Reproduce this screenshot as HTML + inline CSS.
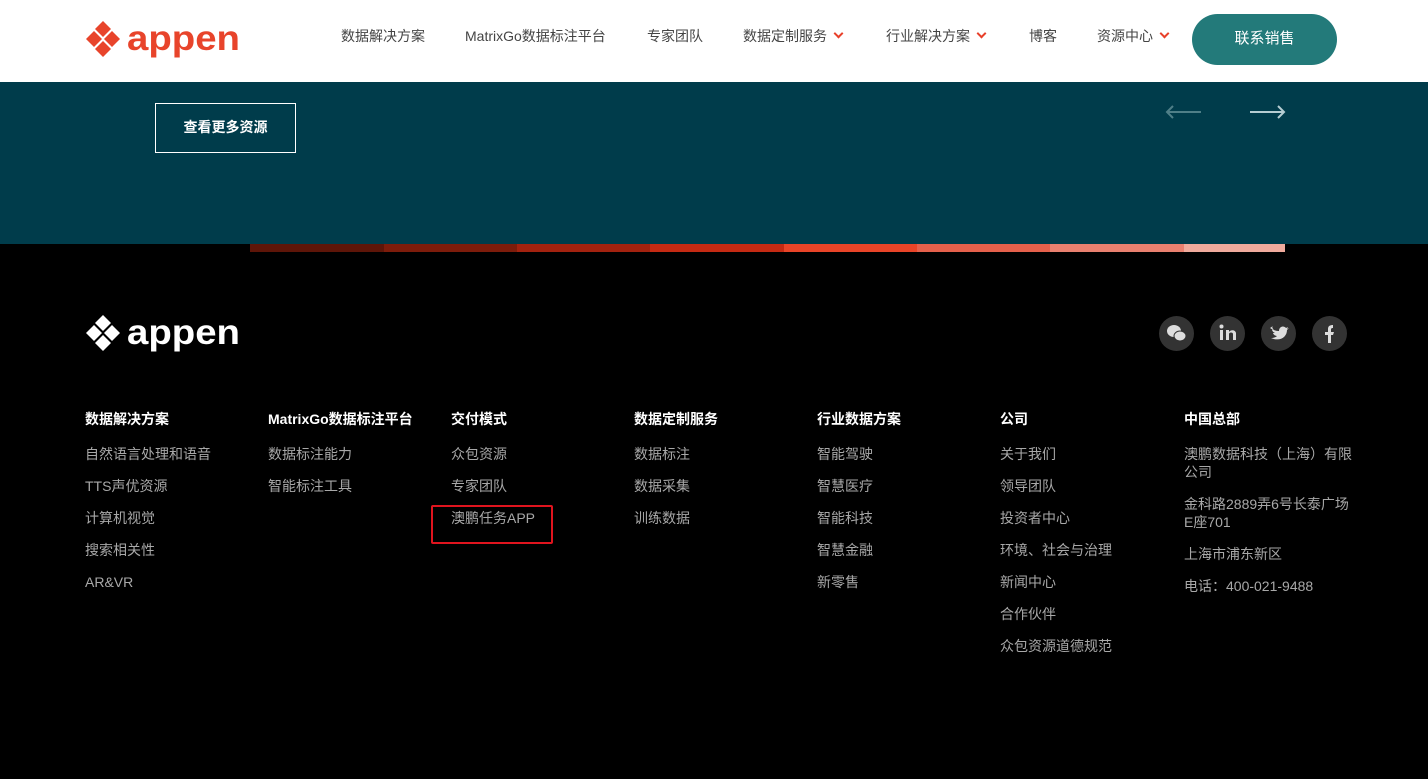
<!DOCTYPE html>
<html><head><meta charset="utf-8"><style>
*{margin:0;padding:0;box-sizing:border-box}
body{width:1428px;height:779px;background:#000;font-family:"Liberation Sans","Noto Sans CJK SC",sans-serif;position:relative;overflow:hidden}
.hdr{position:absolute;left:0;top:0;width:1428px;height:82px;background:#fff}
.nav{position:absolute;top:26px;font-size:14px;color:#444;white-space:nowrap}
.chev{display:inline-block;width:7px;height:7px;border-right:2px solid #e8402a;border-bottom:2px solid #e8402a;transform:rotate(45deg);margin-left:8px;position:relative;top:-4px}
.btn{position:absolute;left:1192px;top:14px;width:145px;height:51px;border-radius:26px;background:#237a7a;color:#fff;font-size:15px;text-align:center;line-height:49px}
.teal{position:absolute;left:0;top:82px;width:1428px;height:162px;background:#003c4b}
.more{position:absolute;left:155px;top:103px;width:141px;height:50px;border:1px solid #fff;color:#fff;font-size:14px;font-weight:bold;text-align:center;line-height:46px}
.bar{position:absolute;top:244px;height:8px}
.col{position:absolute;top:410px;font-size:14px}
.col h4{color:#fff;font-weight:bold;font-size:14px;line-height:18px;margin-bottom:17px}
.col p{color:#a8a8a8;line-height:18px;margin-bottom:14px}
.soc{position:absolute;top:316px;width:35px;height:35px;border-radius:50%;background:#333}
</style></head><body>
<div class="hdr"></div>
<svg style="position:absolute;left:85px;top:20px" width="160" height="40" viewBox="0 0 160 40">
<g fill="#e8442b"><polygon points="18,1 26,9 18,17 10,9"/><polygon points="9,11 17,19 9,27 1,19"/><polygon points="27,11 35,19 27,27 19,19"/><polygon points="18,21 26,29 18,37 10,29"/></g>
<text x="42" y="30" font-family="Liberation Sans,sans-serif" font-size="35" font-weight="bold" fill="#e8442b" textLength="113" lengthAdjust="spacingAndGlyphs">appen</text></svg>
<div class="nav" style="left:341px">数据解决方案</div>
<div class="nav" style="left:465px">MatrixGo数据标注平台</div>
<div class="nav" style="left:647px">专家团队</div>
<div class="nav" style="left:743px">数据定制服务<span class="chev"></span></div>
<div class="nav" style="left:886px">行业解决方案<span class="chev"></span></div>
<div class="nav" style="left:1029px">博客</div>
<div class="nav" style="left:1097px">资源中心<span class="chev"></span></div>
<div class="btn">联系销售</div>
<div class="teal"></div>
<div class="more">查看更多资源</div>
<svg style="position:absolute;left:1164px;top:102px" width="125" height="20"><g fill="none" stroke-width="2"><g stroke="#4f7f88"><line x1="3" y1="10" x2="37" y2="10"/><polyline points="9,4 3,10 9,16"/></g><g stroke="#b5cdd2"><line x1="86" y1="10" x2="120" y2="10"/><polyline points="114,4 120,10 114,16"/></g></g></svg>
<div class="bar" style="left:250px;width:134px;background:#5e1508"></div>
<div class="bar" style="left:384px;width:133px;background:#7d1c0b"></div>
<div class="bar" style="left:517px;width:133px;background:#a3220f"></div>
<div class="bar" style="left:650px;width:134px;background:#c52a13"></div>
<div class="bar" style="left:784px;width:133px;background:#e84428"></div>
<div class="bar" style="left:917px;width:133px;background:#e5604b"></div>
<div class="bar" style="left:1050px;width:134px;background:#e9806f"></div>
<div class="bar" style="left:1184px;width:101px;background:#efaa9c"></div>
<svg style="position:absolute;left:85px;top:314px" width="160" height="40" viewBox="0 0 160 40">
<g fill="#fff"><polygon points="18,1 26,9 18,17 10,9"/><polygon points="9,11 17,19 9,27 1,19"/><polygon points="27,11 35,19 27,27 19,19"/><polygon points="18,21 26,29 18,37 10,29"/></g>
<text x="42" y="30" font-family="Liberation Sans,sans-serif" font-size="35" font-weight="bold" fill="#fff" textLength="113" lengthAdjust="spacingAndGlyphs">appen</text></svg>
<div class="soc" style="left:1159px"><svg width="35" height="35"><ellipse cx="15" cy="15" rx="7" ry="6" fill="#ddd"/><ellipse cx="21" cy="20" rx="6" ry="5" fill="#ddd" stroke="#333" stroke-width="1"/></svg></div>
<div class="soc" style="left:1210px"><svg width="35" height="35"><rect x="10" y="14" width="3" height="10" fill="#ddd"/><circle cx="11.5" cy="10.5" r="2" fill="#ddd"/><path d="M16 14h3v2c1-2 6-3 7 1v7h-3v-6c0-2-4-2-4 0v6h-3z" fill="#ddd"/></svg></div>
<div class="soc" style="left:1261px"><svg width="35" height="35"><path d="M9 12c3 2 6 3 9 3 0-4 4-6 7-3l2-1-1 2 2-1-2 2c0 7-7 12-16 8 3 0 5-1 6-2-2 0-4-2-4-3h2c-2-1-3-2-3-4l2 1c-2-2-2-3-1-4z" fill="#ddd"/></svg></div>
<div class="soc" style="left:1312px"><svg width="35" height="35"><path d="M16 27v-8h-3v-3h3v-3c0-3 2-4 5-4v3c-2 0-2 1-2 2v2h3l-1 3h-2v8z" fill="#ddd"/></svg></div>
<div class="col" style="left:85px"><h4>数据解决方案</h4><p>自然语言处理和语音</p><p>TTS声优资源</p><p>计算机视觉</p><p>搜索相关性</p><p>AR&amp;VR</p></div>
<div class="col" style="left:268px"><h4>MatrixGo数据标注平台</h4><p>数据标注能力</p><p>智能标注工具</p></div>
<div class="col" style="left:451px"><h4>交付模式</h4><p>众包资源</p><p>专家团队</p><p>澳鹏任务APP</p></div>
<div style="position:absolute;left:431px;top:505px;width:122px;height:39px;border:2px solid #e0141e;border-radius:2px"></div>
<div class="col" style="left:634px"><h4>数据定制服务</h4><p>数据标注</p><p>数据采集</p><p>训练数据</p></div>
<div class="col" style="left:817px"><h4>行业数据方案</h4><p>智能驾驶</p><p>智慧医疗</p><p>智能科技</p><p>智慧金融</p><p>新零售</p></div>
<div class="col" style="left:1000px"><h4>公司</h4><p>关于我们</p><p>领导团队</p><p>投资者中心</p><p>环境、社会与治理</p><p>新闻中心</p><p>合作伙伴</p><p>众包资源道德规范</p></div>
<div class="col" style="left:1184px;width:170px"><h4>中国总部</h4><p>澳鹏数据科技（上海）有限公司</p><p>金科路2889弄6号长泰广场<br>E座701</p><p>上海市浦东新区</p><p>电话：400-021-9488</p></div>
</body></html>
